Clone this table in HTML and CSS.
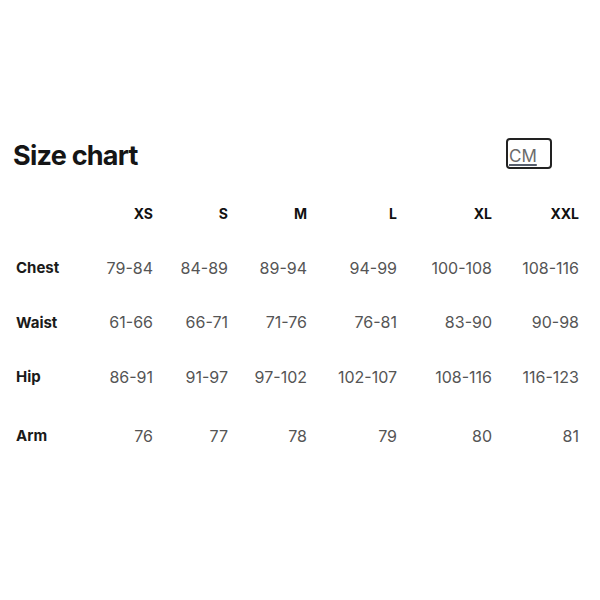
FILE: index.html
```html
<!DOCTYPE html>
<html>
<head>
<meta charset="utf-8">
<link rel="stylesheet" href="styles.css">
</head>
<body>
<div class="page">
  <div class="head">
    <h1 class="title">Size chart</h1>
    <button class="unit">CM</button>
  </div>
  <table class="chart">
    <colgroup>
      <col class="c-label"><col class="c1"><col class="c2"><col class="c3"><col class="c4"><col class="c5"><col class="c6">
    </colgroup>
    <thead>
      <tr class="hrow"><th></th><th>XS</th><th>S</th><th>M</th><th>L</th><th>XL</th><th>XXL</th></tr>
    </thead>
    <tbody>
      <tr><th>Chest</th><td>79-84</td><td>84-89</td><td>89-94</td><td>94-99</td><td>100-108</td><td>108-116</td></tr>
      <tr><th>Waist</th><td>61-66</td><td>66-71</td><td>71-76</td><td>76-81</td><td>83-90</td><td>90-98</td></tr>
      <tr><th>Hip</th><td>86-91</td><td>91-97</td><td>97-102</td><td>102-107</td><td>108-116</td><td>116-123</td></tr>
      <tr class="last"><th>Arm</th><td>76</td><td>77</td><td>78</td><td>79</td><td>80</td><td>81</td></tr>
    </tbody>
  </table>
</div>
</body>
</html>
```
FILE: styles.css
```css
html, body { margin: 0; padding: 0; background: #fff; }
body { font-family: Inter, "Noto Sans", sans-serif; color: #111; }
.page { padding-top: 138px; }
.head { display: flex; justify-content: space-between; align-items: flex-start; padding: 0 48px 0 13px; height: 36px; }
.title { margin: 0; font-size: 27px; font-weight: 700; letter-spacing: -0.75px; color: #151515; line-height: 36px; }
.unit { width: 46px; height: 31px; border: 2px solid #222; border-radius: 4px; background: #fff; padding: 4px 0 0 1px; text-align: left; font-family: Inter, sans-serif; font-size: 17px; line-height: 20px; color: #6b6b6b; text-decoration: underline; text-decoration-color: #555d6b; text-decoration-thickness: 2px; text-underline-offset: 2px; }
.chart { border-collapse: collapse; margin-left: 16px; margin-top: 12px; }
.c-label { width: 85px; }
.c1 { width: 52px; }
.c2 { width: 75px; }
.c3 { width: 79px; }
.c4 { width: 90px; }
.c5 { width: 95px; }
.c6 { width: 87px; }
.chart th, .chart td { padding: 0; text-align: right; height: 54.5px; vertical-align: middle; }
.chart thead th { font-size: 14px; font-weight: 700; color: #111; }
.chart tbody th { text-align: left; font-size: 15px; font-weight: 700; color: #1a1a1a; }
.chart td { font-size: 16px; color: #555; font-weight: 400; }
.chart tr.last th, .chart tr.last td { vertical-align: top; padding-top: 22px; height: 60px; }
```
